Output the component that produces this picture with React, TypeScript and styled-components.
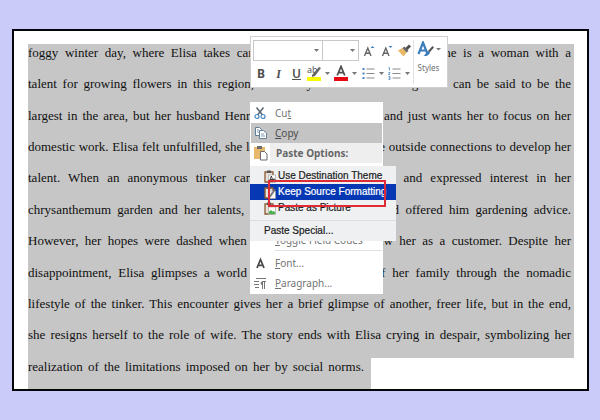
import React from "react";
import styled, { createGlobalStyle } from "styled-components";

const Global = createGlobalStyle`
  *, *::before, *::after { box-sizing: border-box; }
  body { margin: 0; background: #cbcbfa; }
  button { margin: 0; padding: 0; border: 0; background: none; font: inherit; color: inherit; text-align: left; }
`;

const Canvas = styled.main`
  display: flex;
  min-height: 100vh;
  padding: 29px 11px 29px 12px;
`;

const Paper = styled.article`
  position: relative;
  flex: 1;
  min-width: 0;
  display: flex;
  padding: 13px 13px 0 14px;
  background: #fff;
  border: 2px solid #050508;
`;

const Passage = styled.div`
  flex: 1;
  min-width: 0;
  display: flex;
  flex-direction: column;
  color: #101010;
  font-family: "Liberation Serif", "Times New Roman", serif;
  font-size: 13px;
  line-height: 18px;
`;

const Line = styled.div<{ $last?: boolean }>`
  flex: 1;
  width: ${(p) => (p.$last ? "343px" : "auto")};
  padding-right: ${(p) => (p.$last ? "7px" : "3px")};
  background: #c6c6c6;
  white-space: nowrap;
  text-align-last: justify;
`;

const Popups = styled.aside`
  position: absolute;
  top: 5px;
  left: 236px;
  display: flex;
  flex-direction: column;
  align-items: flex-start;
  gap: 14px;
`;

const Toolbar = styled.div`
  display: flex;
  width: 198px;
  height: 52px;
  background: #fff;
  border: 1px solid #d0d0d0;
  color: #505050;
  font-family: "Noto Sans", "Open Sans", sans-serif;
`;

const Tools = styled.div`
  flex: 1;
  min-width: 0;
  display: flex;
  flex-direction: column;
  justify-content: space-between;
  padding: 3px 0 3px 2px;
`;

const ToolRow = styled.div`
  display: flex;
  align-items: center;
  height: 21px;
`;

const Field = styled.select<{ $wide?: boolean }>`
  appearance: none;
  width: ${(p) => (p.$wide ? "70px" : "37px")};
  height: 21px;
  margin: 0 0 0 ${(p) => (p.$wide ? "0" : "-1px")};
  border: 1px solid #c8c8c8;
  border-radius: 0;
  background: #fff;
`;

const FieldBox = styled.label`
  display: grid;
  align-items: center;
  justify-items: end;
  > * { grid-area: 1 / 1; }
  > svg { margin-right: 4px; pointer-events: none; }
`;

const IconButton = styled.button<{ $w: number }>`
  display: flex;
  flex: none;
  align-items: center;
  justify-content: center;
  width: ${(p) => p.$w}px;
  height: 20px;
`;

const Letter = styled.span<{ $kind: "bold" | "italic" | "under" }>`
  font-size: 12px;
  line-height: 16px;
  font-weight: ${(p) => (p.$kind === "under" ? 600 : 700)};
  font-style: ${(p) => (p.$kind === "italic" ? "italic" : "normal")};
  font-family: ${(p) => (p.$kind === "italic" ? '"Liberation Serif", serif' : "inherit")};
  text-decoration: ${(p) => (p.$kind === "under" ? "underline" : "none")};
`;

const StylesButton = styled.button`
  display: flex;
  flex: none;
  flex-direction: column;
  align-items: center;
  gap: 3px;
  width: 34px;
  margin: 3px 0;
  padding: 1px 4px 0 0;
  border-left: 1px solid #e2e2e2;
  color: #707070;
  font-size: 8px;
  line-height: 14px;
`;

const Menu = styled.div`
  position: relative;
  display: flex;
  flex-direction: column;
  width: 133px;
  height: 192px;
  padding: 1px;
  background: #fff;
  color: #6a6a6a;
  font-family: "Noto Sans", "Open Sans", sans-serif;
  font-size: 10px;
  line-height: 14px;
`;

const MenuItem = styled.button<{ $active?: boolean }>`
  display: grid;
  grid-template-columns: 24px 1fr;
  align-items: center;
  height: 20px;
  flex: none;
  background: ${(p) => (p.$active ? "#c4c4c4" : "transparent")};
  color: ${(p) => (p.$active ? "#4c4c4c" : "#747474")};
  > svg { margin-left: 3px; }
`;

const SectionTitle = styled.div`
  display: grid;
  grid-template-columns: 19px 1fr;
  align-items: center;
  height: 20px;
  flex: none;
  color: #666;
  font-weight: 700;
  > svg { margin-left: 3px; }
  > span { height: 20px; padding: 3px 6px; background: #eee; }
`;

const Tail = styled.div`
  display: flex;
  flex-direction: column;
  margin-top: auto;
`;

const Rule = styled.hr`
  width: 107px;
  margin: 0 0 2px auto;
  border: 0;
  border-top: 1px solid #e0e0e0;
`;

const Submenu = styled.div`
  position: absolute;
  top: 64px;
  left: 0;
  display: flex;
  flex-direction: column;
  width: 146px;
  height: 75px;
  padding-top: 2px;
  background: #eef0f1;
  color: #1c1c1c;
  font-family: "Liberation Sans", Arial, sans-serif;
  font-size: 10px;
  line-height: 16px;
  -webkit-text-stroke: 0.2px;
`;

const SubItem = styled.button<{ $selected?: boolean }>`
  display: flex;
  align-items: center;
  gap: 2px;
  height: 16px;
  flex: none;
  padding-left: 14px;
  white-space: nowrap;
  background: ${(p) => (p.$selected ? "#0738b4" : "transparent")};
  color: ${(p) => (p.$selected ? "#fff" : "inherit")};
`;

const SubRule = styled.hr`
  width: 100%;
  margin: 4px 0 2px;
  border: 0;
  border-top: 1px solid #dcdedf;
`;

const Highlight = styled.div`
  position: absolute;
  top: 14px;
  left: 18px;
  width: 118px;
  height: 27px;
  border: 2px solid #df2b36;
  pointer-events: none;
`;

const Caret = () => (
  <svg width="5" height="3" viewBox="0 0 5 3"><path d="M0 0h5L2.500 3z" fill="#777" /></svg>
);

const SizeIcon = ({ down }: { down?: boolean }) => (
  <svg width="13" height="14" viewBox="0 0 13 14" fill="none">
    <path d="M1.500 12L4.800 4L8 12M2.700 9.300h4.200" stroke="#666" strokeWidth="1.400" />
    <path d={down ? "M7.500 2h4L9.500 4z" : "M7.500 4h4L9.500 2z"} fill="#3f7fc0" />
  </svg>
);

const BrushIcon = () => (
  <svg width="13" height="13" viewBox="0 0 13 13">
    <path d="M0 6.500l4.500-2.500 4 4.500L5.500 12.500z" fill="#eab765" />
    <path d="M4.500 4l2-1.500 4 4.500L8.500 8.500z" fill="#666" />
    <path d="M7.500 4l3.500-3.500 2 2-3.500 3.500z" fill="#4b4b4b" />
  </svg>
);

const HighlighterIcon = () => (
  <svg width="15" height="17" viewBox="0 0 15 17">
    <text x="0" y="8" fontSize="9" fontFamily="Noto Sans" fill="#555">ab</text>
    <path d="M5 10l7-8 2 1-6 8-3 1z" fill="#666" />
    <rect x="0" y="12" width="14" height="4" fill="#fbfb00" />
  </svg>
);

const FontColorIcon = () => (
  <svg width="15" height="17" viewBox="0 0 15 17">
    <path d="M3.200 10.500L7 1.500l3.800 9M4.800 7.600h4.400" fill="none" stroke="#505050" strokeWidth="1.800" />
    <rect x="0" y="12" width="14" height="4" fill="#e50914" />
  </svg>
);

const ListIcon = ({ numbered }: { numbered?: boolean }) => (
  <svg width="13" height="13" viewBox="0 0 13 13" fill="none">
    <path d="M4.500 2h8M4.500 6.500h8M4.500 11h8" stroke="#8a8a8a" />
    {numbered ? (
      <path d="M.500 1l1-.5v3M.500 5.500h1.500l-1.500 2h1.500M.500 9.500h1.500v3H.500M.500 11h1.500" stroke="#4a86c2" strokeWidth=".8" />
    ) : (
      <path d="M.500 1h2v2h-2zM.500 5.500h2v2h-2zM.500 10h2v2h-2z" fill="#4a86c2" />
    )}
  </svg>
);

const StylesIcon = () => (
  <svg width="24" height="17" viewBox="0 0 24 17">
    <path d="M1.500 13L6 1.500l4.500 11.500M3 9.500h6" fill="none" stroke="#3b7cbc" strokeWidth="2.200" />
    <path d="M15.500 5L17 6.500l-4.500 5L11 10z" fill="#555" />
    <path d="M11 10l2 1.500c-1 3-4 4-6.500 3.500 2-.8 2-3.500 4.500-5z" fill="#3b7cbc" />
    <path d="M19 7h5L21.500 9.500z" fill="#777" />
  </svg>
);

const CutIcon = () => (
  <svg width="13" height="14" viewBox="0 0 13 14" fill="none">
    <path d="M2.500 1.500l6 7.500M9.500 1.500l-6 7.500" stroke="#5a6670" strokeWidth="1.500" />
    <circle cx="3" cy="10.500" r="2" stroke="#4a86c2" strokeWidth="1.200" />
    <circle cx="9" cy="10.500" r="2" stroke="#4a86c2" strokeWidth="1.200" />
  </svg>
);

const CopyIcon = () => (
  <svg width="14" height="14" viewBox="0 0 14 14" stroke="#607f9d">
    <path d="M1.500 1.500h4l2 2v6h-6z" fill="#fff" />
    <path d="M5.500 4.500h4l3 2.500v5.500h-7z" fill="#fff" />
    <path d="M3 4h2M3 6h2M7 8h3M7 10h4" strokeWidth=".8" />
  </svg>
);

const PasteIcon = () => (
  <svg width="14" height="16" viewBox="0 0 14 16">
    <path d="M0 2h11v12H0z" fill="#e8b86c" />
    <path d="M3 1h5v3H3z" fill="#6b6b6b" />
    <path d="M6.500 6.500h4l2.500 2.500v6H6.500z" fill="#fff" stroke="#6b6b6b" />
  </svg>
);

const ParagraphIcon = () => (
  <svg width="13" height="13" viewBox="0 0 13 13" fill="none" stroke="#777">
    <path d="M2 1.500h10M0 4.500h5M0 7.500h5M1 10.500h4M8.500 4v8M10.500 4v8M12 4.500H8" />
    <path d="M8.500 4.500a1.800 1.800 0 000 3.500z" fill="#777" />
  </svg>
);

const FontIcon = () => (
  <svg width="13" height="13" viewBox="0 0 13 13" fill="none">
    <path d="M3 11L6.500 2.500l3.500 8.500M4.200 8.300h4.600" stroke="#4c4c4c" strokeWidth="1.800" />
  </svg>
);

const ClipIcon = ({ kind }: { kind: "text" | "brush" | "picture" }) => (
  <svg width="12" height="13" viewBox="0 0 12 13">
    <path d="M1 2h8v10H1z" fill="#e9e2d8" stroke="#8a5a34" strokeWidth="1.300" />
    <path d="M3 .500h4V3H3z" fill="#555" />
    <path d="M4.500 5h7v7.500h-7z" fill="#fff" stroke="#9a9a9a" strokeWidth=".6" />
    {kind === "text" && <path d="M5.500 11l1.800-5 1.800 5M6 9.500h2.500M9.500 9h1.500v2H9.500z" fill="none" stroke="#333" strokeWidth=".9" />}
    {kind === "brush" && <path d="M5 11l2-4 4-4 .8.8-3 4.500L6 12z" fill="#777" />}
    {kind === "picture" && <path d="M5 12V9.500L7 8l1.500 1.500L9.500 9l1.800 1.500V12z" fill="#4caf50" />}
  </svg>
);

const lines = [
  "foggy winter day, where Elisa takes care of her garden every morning. She is a woman with a",
  "talent for growing flowers in this region, and every flower from her garden can be said to be the",
  "largest in the area, but her husband Henry is a diligent merchant and just wants her to focus on her",
  "domestic work. Elisa felt unfulfilled, she longed to have some more outside connections to develop her",
  "talent. When an anonymous tinker came to her home one day and expressed interest in her",
  "chrysanthemum garden and her talents, she opened up to him and offered him gardening advice.",
  "However, her hopes were dashed when the tinker eventually saw her as a customer. Despite her",
  "disappointment, Elisa glimpses a world beyond the concerns of her family through the nomadic",
  "lifestyle of the tinker. This encounter gives her a brief glimpse of another, freer life, but in the end,",
  "she resigns herself to the role of wife. The story ends with Elisa crying in despair, symbolizing her",
  "realization of the limitations imposed on her by social norms.",
];

export default function App() {
  return (
    <>
      <Global />
      <Canvas>
        <Paper>
          <Passage>
            {lines.map((text, i) => (
              <Line key={i} $last={i === lines.length - 1}>{text}</Line>
            ))}
          </Passage>
          <Popups>
            <Toolbar role="toolbar">
              <Tools>
                <ToolRow>
                  <FieldBox><Field $wide aria-label="Font" /><Caret /></FieldBox>
                  <FieldBox><Field aria-label="Font size" /><Caret /></FieldBox>
                  <IconButton $w={20} aria-label="Grow font"><SizeIcon /></IconButton>
                  <IconButton $w={16} aria-label="Shrink font"><SizeIcon down /></IconButton>
                  <IconButton $w={19} aria-label="Format painter"><BrushIcon /></IconButton>
                </ToolRow>
                <ToolRow>
                  <IconButton $w={16} aria-label="Bold"><Letter $kind="bold">B</Letter></IconButton>
                  <IconButton $w={19} aria-label="Italic"><Letter $kind="italic">I</Letter></IconButton>
                  <IconButton $w={17} aria-label="Underline"><Letter $kind="under">U</Letter></IconButton>
                  <IconButton $w={18} aria-label="Highlight"><HighlighterIcon /></IconButton>
                  <IconButton $w={9} aria-label="Highlight colors"><Caret /></IconButton>
                  <IconButton $w={18} aria-label="Font color"><FontColorIcon /></IconButton>
                  <IconButton $w={9} aria-label="Font colors"><Caret /></IconButton>
                  <IconButton $w={18} aria-label="Bullets"><ListIcon /></IconButton>
                  <IconButton $w={8} aria-label="Bullet styles"><Caret /></IconButton>
                  <IconButton $w={18} aria-label="Numbering"><ListIcon numbered /></IconButton>
                  <IconButton $w={8} aria-label="Numbering styles"><Caret /></IconButton>
                </ToolRow>
              </Tools>
              <StylesButton><StylesIcon />Styles</StylesButton>
            </Toolbar>
            <Menu>
              <MenuItem><CutIcon /><span>Cu<u>t</u></span></MenuItem>
              <MenuItem $active><CopyIcon /><span><u>C</u>opy</span></MenuItem>
              <SectionTitle><PasteIcon /><span>Paste Options:</span></SectionTitle>
              <Tail>
                <MenuItem><i /><span><u>T</u>oggle Field Codes</span></MenuItem>
                <Rule />
                <MenuItem><FontIcon /><span><u>F</u>ont...</span></MenuItem>
                <MenuItem><ParagraphIcon /><span><u>P</u>aragraph...</span></MenuItem>
              </Tail>
              <Submenu>
                <SubItem><ClipIcon kind="text" />Use Destination Theme</SubItem>
                <SubItem $selected><ClipIcon kind="brush" />Keep Source Formatting</SubItem>
                <SubItem><ClipIcon kind="picture" />Paste as Picture</SubItem>
                <SubRule />
                <SubItem>Paste Special...</SubItem>
                <Highlight />
              </Submenu>
            </Menu>
          </Popups>
        </Paper>
      </Canvas>
    </>
  );
}
